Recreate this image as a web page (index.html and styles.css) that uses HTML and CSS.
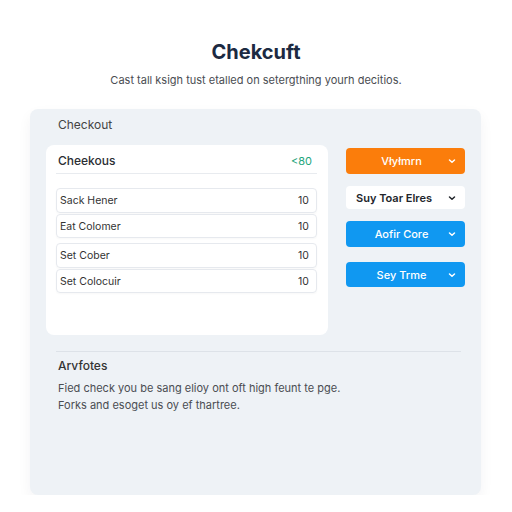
FILE: index.html
```html
<!DOCTYPE html>
<html lang="en">
<head>
  <meta charset="UTF-8" />
  <meta name="viewport" content="width=device-width, initial-scale=1.0"/>
  <title>Chekcuft</title>
  <link rel="stylesheet" href="styles.css">
</head>
<body>

  <div class="header">
    <h1>Chekcuft</h1>
    <p>Cast tall ksigh tust etalled on setergthing yourh decitios.</p>
  </div>

  <div class="panel">
    <p class="panel-label">Checkout</p>

    <div class="main">
      <div class="card">
        <div class="card-head">
          <span class="card-title">Cheekous</span>
          <span class="card-total">&lt;80</span>
        </div>

        <div class="group first">
          <div class="row"><span>Sack Hener</span><span>10</span></div>
          <div class="row"><span>Eat Colomer</span><span>10</span></div>
        </div>
        <div class="group">
          <div class="row"><span>Set Cober</span><span>10</span></div>
          <div class="row"><span>Set Colocuir</span><span>10</span></div>
        </div>
      </div>

      <div class="actions">
        <button class="btn orange"><span>Vłyłmrn</span><svg viewBox="0 0 10 10"><path d="M2.5 4 L5 6.3 L7.5 4" /></svg></button>
        <button class="btn plain"><span>Suy Toar Elres</span><svg viewBox="0 0 10 10"><path d="M2.5 4 L5 6.3 L7.5 4" /></svg></button>
        <button class="btn blue"><span>Aofir Core</span><svg viewBox="0 0 10 10"><path d="M2.5 4 L5 6.3 L7.5 4" /></svg></button>
        <button class="btn blue last"><span>Sey Trme</span><svg viewBox="0 0 10 10"><path d="M2.5 4 L5 6.3 L7.5 4" /></svg></button>
      </div>
    </div>

    <div class="notes">
      <h2>Arvfotes</h2>
      <p>Fied check you be sang elioy ont oft high feunt te pge.</p>
      <p>Forks and esoget us oy ef thartree.</p>
    </div>
  </div>

</body>
</html>
```

FILE: styles.css
```css
body {
  margin: 0;
  background-color: #fff;
  font-family: Inter, "Open Sans", sans-serif;
  color: #333;
}

.header {
  text-align: center;
  padding-top: 39px;
}

.header h1 {
  margin: 0;
  font-size: 20px;
  line-height: 26px;
  font-weight: 700;
  color: #1c2a42;
}

.header p {
  margin: 7px 0 0;
  font-size: 11px;
  line-height: 16px;
  color: #4a4d52;
}

.panel {
  margin: 21px 31px 0 30px;
  height: 386px;
  box-sizing: border-box;
  padding: 8px 16px 0;
  background-color: #eef2f6;
  border-radius: 8px;
  box-shadow: 0 6px 14px rgba(30, 40, 60, 0.05);
}

.panel-label {
  margin: 0 0 0 12px;
  font-size: 12px;
  line-height: 16px;
  color: #444;
}

.main {
  display: grid;
  grid-template-columns: 282px 1fr;
  gap: 18px;
  margin-top: 12px;
}

.card {
  height: 190px;
  box-sizing: border-box;
  padding: 0 11px 0 10px;
  background-color: #fff;
  border-radius: 8px;
}

.card-head {
  display: flex;
  justify-content: space-between;
  padding: 8px 5px 4px 2px;
  border-bottom: 1px solid #e8ebef;
  font-size: 12px;
  line-height: 16px;
}

.card-title {
  font-weight: 500;
  color: #2a2d33;
}

.card-total {
  color: #1fa57c;
  font-size: 11px;
}

.group {
  margin-top: 5px;
}

.group.first {
  margin-top: 14px;
}

.row {
  display: flex;
  justify-content: space-between;
  align-items: center;
  height: 24px;
  padding: 0 7px 0 3px;
  margin-bottom: 1px;
  border: 1px solid #e6e9ee;
  border-radius: 4px;
  box-sizing: border-box;
  font-size: 10.5px;
  color: #333;
  box-shadow: 0 1px 2px rgba(0, 0, 0, 0.03);
}

.group .row:first-child {
  height: 25px;
}

.actions {
  display: flex;
  flex-direction: column;
  padding-top: 3px;
}

.btn {
  display: flex;
  align-items: center;
  height: 26px;
  margin-bottom: 12px;
  padding: 0 8px 0 10px;
  border: none;
  border-radius: 4px;
  font-family: inherit;
  font-size: 11px;
  font-weight: 500;
  color: #fff;
  cursor: pointer;
}

.btn span {
  flex: 1;
  text-align: center;
}

.btn svg {
  width: 10px;
  height: 10px;
}

.btn path {
  fill: none;
  stroke: currentColor;
  stroke-width: 1.5;
  stroke-linecap: round;
  stroke-linejoin: round;
}

.orange {
  background-color: #fb7d0b;
}

.plain {
  height: 23px;
  background-color: #fff;
  color: #22252b;
  font-weight: 600;
}

.plain span {
  text-align: left;
}

.blue {
  background-color: #1098f1;
}

.blue.last {
  height: 25px;
  margin-top: 3px;
}

.notes {
  margin: 16px 4px 0 10px;
  padding: 6px 0 0 2px;
  border-top: 1px solid #dde2e8;
}

.notes h2 {
  margin: 0 0 6px;
  font-size: 12px;
  line-height: 16px;
  font-weight: 500;
  color: #333;
}

.notes p {
  margin: 0;
  font-size: 11px;
  line-height: 17px;
  color: #4a4d52;
}
```
